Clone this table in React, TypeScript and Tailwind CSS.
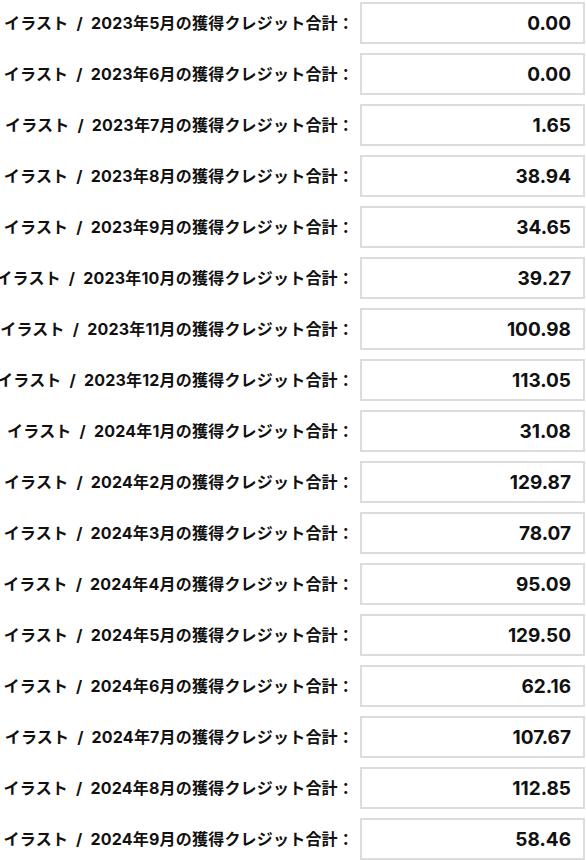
const rows: [string, string][] = [
  ["2023年5月", "0.00"],
  ["2023年6月", "0.00"],
  ["2023年7月", "1.65"],
  ["2023年8月", "38.94"],
  ["2023年9月", "34.65"],
  ["2023年10月", "39.27"],
  ["2023年11月", "100.98"],
  ["2023年12月", "113.05"],
  ["2024年1月", "31.08"],
  ["2024年2月", "129.87"],
  ["2024年3月", "78.07"],
  ["2024年4月", "95.09"],
  ["2024年5月", "129.50"],
  ["2024年6月", "62.16"],
  ["2024年7月", "107.67"],
  ["2024年8月", "112.85"],
  ["2024年9月", "58.46"],
];

export default function App() {
  return (
    <div
      className="w-[586px] h-[860px] overflow-hidden bg-white text-[#111] pt-[2px] flex flex-col gap-[9px]"
      style={{ fontFamily: 'Inter, "Noto Sans CJK JP", sans-serif' }}
    >
      {rows.map(([month, value]) => (
        <div key={month} className="flex items-center h-[42px] shrink-0">
          {/* label, right aligned, overflows to the left when too long */}
          <div className="w-[360px] shrink-0 flex justify-end pr-[6px]">
            <span className="whitespace-nowrap shrink-0 font-bold text-[16px] leading-none tracking-[0.2px]">
              イラスト<span className="px-[4px]"> / </span>{month}の獲得クレジット合計：
            </span>
          </div>
          <div className="w-[225px] h-[42px] shrink-0 border-2 border-[#dcdcdc] flex items-center justify-end pr-[12px]">
            <span className="font-bold text-[19px] leading-none">{value}</span>
          </div>
        </div>
      ))}
    </div>
  );
}
